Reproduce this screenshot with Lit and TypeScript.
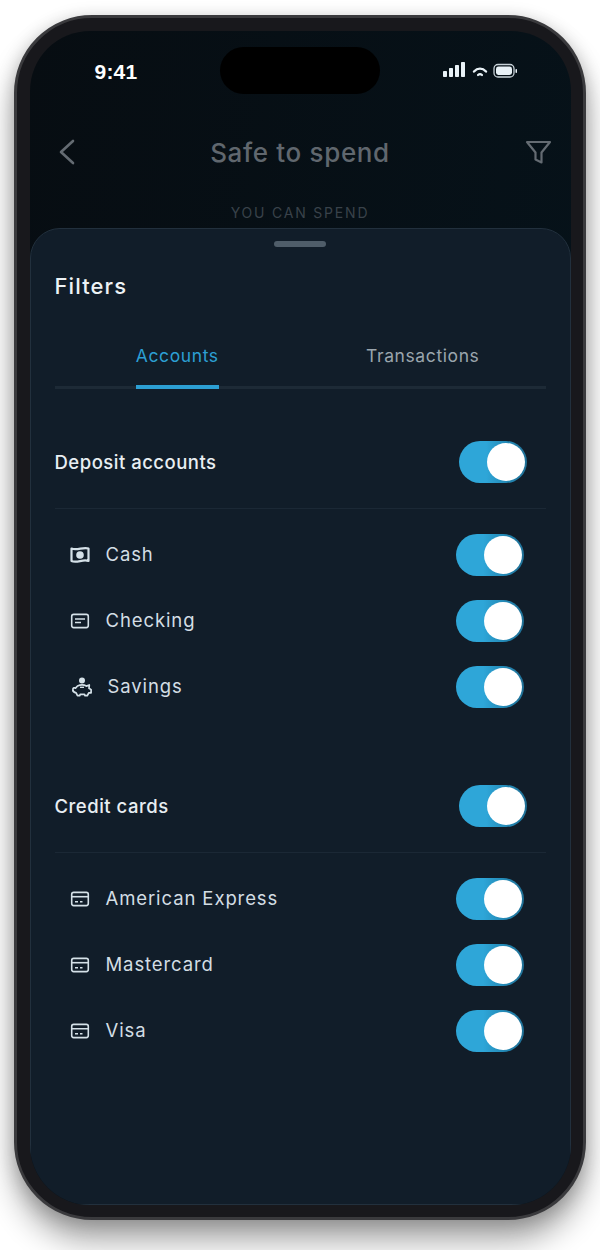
import { LitElement, html, css, svg } from "lit";
import { customElement, property } from "lit/decorators.js";

const icons: Record<string, unknown> = {
  cash: svg`<path d="M1.500 3.500c5.500 2.600 11.500-2 17 0v12.500c-5.500-2.200-11.500 2.400-17 0z" fill="none" stroke="currentColor" stroke-width="2.200" stroke-linejoin="round"/><circle cx="10" cy="10" r="3.800" fill="currentColor"/>`,
  check: svg`<rect x="1.700" y="3.400" width="16.600" height="13.200" rx="2" fill="none" stroke="currentColor" stroke-width="1.600"/><path d="M5 8h10M5 11.500h6" stroke="currentColor" stroke-width="1.500"/>`,
  piggy: svg`<circle cx="10" cy="3.600" r="3" fill="currentColor"/><path d="M5.500 9c2.800-1.200 6.500-1.200 8.800 .1l3-1.100-.3 3.300 2.100 1.300v3.200h-2.200l-1.700 2.900h-2.200l-.5-1.300H8.200l-.5 1.300H5.500l-1.400-2.900C2 15.400.6 13.800.9 12.200c.2-1.300 1.700-1.800 2.600-1.100z" fill="none" stroke="currentColor" stroke-width="1.700" stroke-linejoin="round"/><path d="M8 10.300h4" stroke="currentColor" stroke-width="1.400"/>`,
  card: svg`<rect x="1.700" y="3.400" width="16.600" height="13.200" rx="2" fill="none" stroke="currentColor" stroke-width="1.600"/><path d="M2 7.700h16" stroke="currentColor" stroke-width="1.600"/><path d="M5 12.800h3M10 12.800h2.500" stroke="currentColor" stroke-width="1.500"/>`,
};

@customElement("filter-toggle")
class FilterToggle extends LitElement {
  static styles = css`
    :host { display: block; }
    .track {
      box-sizing: border-box;
      width: 68px;
      height: 42px;
      border-radius: 21px;
      padding: 2px;
      display: flex;
      justify-content: flex-end;
      background: linear-gradient(90deg, #2ea6d8 0%, #2ea6d8 40%, #2389b6 70%, #1f6f95 100%);
    }
    .knob { width: 38px; height: 38px; border-radius: 50%; background: #fff; }
  `;
  render() {
    return html`<div class="track"><div class="knob"></div></div>`;
  }
}

@customElement("filter-row")
class FilterRow extends LitElement {
  @property() label = "";
  @property() icon = "card";
  static styles = css`
    :host { display: block; }
    .row {
      height: 42px;
      display: flex;
      align-items: center;
      padding: 0 22px 0 15px;
      color: #d3dde4;
      font-size: 18.500px;
      letter-spacing: 0.9px;
    }
    svg { width: 20px; height: 20px; flex: none; margin-right: 16px; color: #d5e1e8; }
    svg.piggy { margin-left: 2px; }
    .label { flex: 1; padding-bottom: 2px; }
  `;
  render() {
    return html`<div class="row">
      <svg viewBox="0 0 20 20" class=${this.icon}>${icons[this.icon]}</svg>
      <span class="label">${this.label}</span>
      <filter-toggle></filter-toggle>
    </div>`;
  }
}

@customElement("app-root")
class AppRoot extends LitElement {
  static styles = css`
    :host {
      display: block;
      width: 600px;
      height: 1250px;
      overflow: hidden;
      background: #fff;
      font-family: Inter, "Liberation Sans", sans-serif;
    }
    .page { padding: 15px 14px 0; }
    .phone {
      box-sizing: border-box;
      width: 572px;
      height: 1205px;
      position: relative;
      border-radius: 78px;
      border: 3.500px solid #3a3a3d;
      background: #18181c;
      padding: 12.500px;
      box-shadow: 0 22px 30px rgba(0,0,0,.32), 0 4px 18px rgba(0,0,0,.22);
    }
    .screen {
      height: 100%;
      border-radius: 60px;
      overflow: hidden;
      display: flex;
      flex-direction: column;
      background: linear-gradient(100deg, #070d12 0%, #06131b 100%);
      position: relative;
    }
    .island {
      position: absolute;
      left: 190px;
      top: 16px;
      width: 160px;
      height: 47px;
      border-radius: 24px;
      background: #000;
    }
    .status {
      height: 84px;
      padding: 26px 52px 0 65px;
      box-sizing: border-box;
      display: flex;
      justify-content: space-between;
      align-items: flex-start;
    }
    .time {
      color: #fff;
      font: 700 21px/30px "Liberation Sans", Arial, sans-serif;
      letter-spacing: .2px;
    }
    .sys { width: 76px; height: 18px; margin-top: 5px; display: block; }
    .nav {
      height: 74px;
      padding: 0 19px;
      display: grid;
      grid-template-columns: 1fr auto 1fr;
      align-items: center;
      color: #646b72;
      box-sizing: border-box;
    }
    .nav svg { display: block; fill: none; stroke: currentColor; stroke-linecap: round; stroke-linejoin: round; }
    .back { margin-left: 9px; }
    .funnel { justify-self: end; }
    .title {
      font-size: 26px;
      font-weight: 500;
      letter-spacing: .65px;
      color: #60676e;
      padding-top: 1px;
    }
    .spend {
      height: 39px;
      text-align: center;
      color: #39424a;
      font-size: 14px;
      line-height: 48px;
      letter-spacing: 1.800px;
    }
    .sheet {
      flex: 1;
      box-sizing: border-box;
      border: 1px solid #22303d;
      border-radius: 30px 30px 0 0;
      background: #111d29;
      padding: 12px 24px 0;
    }
    .handle { width: 52px; height: 6px; border-radius: 3px; background: #4f5d69; margin: 0 auto; }
    h2 {
      margin: 24px 0 0;
      font-size: 22px;
      line-height: 30px;
      font-weight: 500;
      letter-spacing: 1.100px;
      color: #edf2f5;
    }
    .tabs {
      margin-top: 41px;
      display: grid;
      grid-template-columns: 1fr 1fr;
      border-bottom: 3px solid #1d2a36;
      height: 47px;
      box-sizing: border-box;
    }
    .tab {
      justify-self: center;
      font-size: 17.500px;
      letter-spacing: .6px;
      line-height: 28px;
      color: #9aa5ad;
      height: 47px;
      box-sizing: border-box;
    }
    .tab.on { color: #2c9fd3; border-bottom: 4px solid #2c9fd3; }
    .head {
      height: 42px;
      display: flex;
      align-items: center;
      justify-content: space-between;
      padding-right: 19px;
      color: #e8eef2;
      font-size: 18.500px;
      font-weight: 500;
      letter-spacing: .5px;
    }
    .rule { height: 1px; background: #1b2835; margin: 25px 0 25px; }
    .rows { display: grid; gap: 24px; }
    .g1 { margin-top: 52px; }
    .g2 { margin-top: 77px; }
  `;

  private renderGroup(cls: string, title: string, rows: [string, string][]) {
    return html`<section class=${cls}>
      <div class="head"><span>${title}</span><filter-toggle></filter-toggle></div>
      <div class="rule"></div>
      <div class="rows">
        ${rows.map(([l, i]) => html`<filter-row .label=${l} .icon=${i}></filter-row>`)}
      </div>
    </section>`;
  }

  render() {
    return html`<div class="page"><div class="phone"><div class="screen">
      <div class="island"></div>
      <div class="status">
        <span class="time">9:41</span>
        <svg class="sys" viewBox="0 0 76 18" fill="#e9f2f7">
          <rect x="0" y="9" width="4" height="6" rx=".8"/><rect x="6" y="6" width="4" height="9" rx=".8"/>
          <rect x="12" y="3" width="4" height="12" rx=".8"/><rect x="18" y="0" width="4" height="15" rx=".8"/>
          <path d="M31 9.500c3.500-3.800 8.500-3.800 12 0" fill="none" stroke="#e9f2f7" stroke-width="2.400" stroke-linecap="round"/>
          <path d="M35 13c1.300-1.200 2.700-1.200 4 0" fill="none" stroke="#e9f2f7" stroke-width="2.200" stroke-linecap="round"/>
          <rect x="51" y="2.500" width="20" height="12.500" rx="4" fill="none" stroke="#c8d2d8" stroke-width="1.300"/>
          <rect x="53" y="4.500" width="16" height="8.500" rx="2.400"/>
          <rect x="72.500" y="7" width="1.500" height="4" rx=".7"/>
        </svg>
      </div>
      <div class="nav">
        <svg class="back" width="18" height="26" viewBox="0 0 18 26" stroke-width="2.600"><path d="M15 2 3 13l12 11"/></svg>
        <span class="title">Safe to spend</span>
        <svg class="funnel" width="27" height="26" viewBox="0 0 27 26" stroke-width="2.200"><path d="M2 3h23L16.500 13.500v10l-6-3v-7z"/></svg>
      </div>
      <div class="spend">YOU CAN SPEND</div>
      <div class="sheet">
        <div class="handle"></div>
        <h2>Filters</h2>
        <div class="tabs">
          <div class="tab on">Accounts</div>
          <div class="tab">Transactions</div>
        </div>
        ${this.renderGroup("g1", "Deposit accounts", [["Cash", "cash"], ["Checking", "check"], ["Savings", "piggy"]])}
        ${this.renderGroup("g2", "Credit cards", [["American Express", "card"], ["Mastercard", "card"], ["Visa", "card"]])}
      </div>
    </div></div></div>`;
  }
}
